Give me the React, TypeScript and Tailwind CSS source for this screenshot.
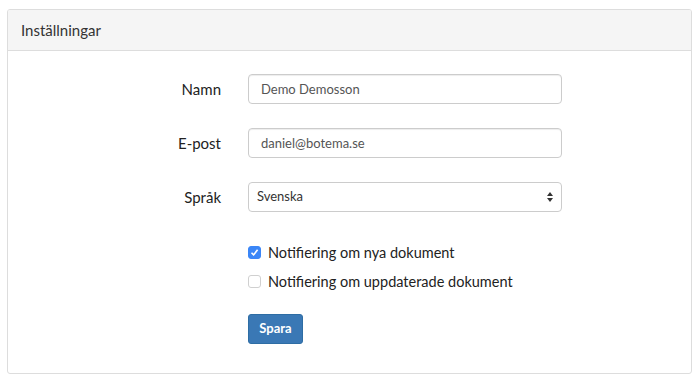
import { useState } from "react";

const Row = ({ label, children }: { label: string; children: React.ReactNode }) => (
  <div className="flex items-center h-[30px]">
    <label className="w-[213px] text-right text-[15px] text-[#222]">{label}</label>
    <div className="ml-[27px] w-[314px]">{children}</div>
  </div>
);

const Check = ({
  checked,
  onChange,
  label,
}: {
  checked: boolean;
  onChange: (v: boolean) => void;
  label: string;
}) => (
  <label className="flex items-center h-[13px] text-[14.5px] text-[#222] cursor-pointer">
    <span
      className={
        checked
          ? "w-[13px] h-[13px] rounded-[3px] bg-[#3b86f7] border border-[#3b86f7] flex items-center justify-center"
          : "w-[13px] h-[13px] rounded-[3px] bg-white border border-[#d0d0d0]"
      }
    >
      {checked && (
        <svg width="9" height="9" viewBox="0 0 9 9">
          <path d="M1.5 4.8 L3.6 6.9 L7.6 1.8" stroke="white" strokeWidth="1.6" fill="none" />
        </svg>
      )}
    </span>
    <input
      type="checkbox"
      className="hidden"
      checked={checked}
      onChange={(e) => onChange(e.target.checked)}
    />
    <span className="ml-[7px]">{label}</span>
  </label>
);

const App = () => {
  const [name, setName] = useState("Demo Demosson");
  const [email, setEmail] = useState("daniel@botema.se");
  const [lang, setLang] = useState("sv");
  const [newDocs, setNewDocs] = useState(true);
  const [updDocs, setUpdDocs] = useState(false);

  return (
    <div
      className="min-h-[384px] bg-white pt-[9px] px-[7px]"
      style={{ fontFamily: "Lato, 'Open Sans', sans-serif" }}
    >
      <div className="w-[685px] h-[365px] border border-[#dddddd] rounded-[3px] overflow-hidden">
        <div className="h-[41px] bg-[#f5f5f5] border-b border-[#dddddd] flex items-center px-[13px] text-[15px] text-[#333]">
          Inställningar
        </div>
        <form className="pt-[23px]" onSubmit={(e) => e.preventDefault()}>
          <div className="flex flex-col gap-[24px]">
            <Row label="Namn">
              <input
                className="w-full h-[30px] border border-[#cccccc] rounded-[4px] px-[12px] text-[13px] text-[#555] outline-none shadow-[inset_0_1px_1px_rgba(0,0,0,0.075)]"
                value={name}
                onChange={(e) => setName(e.target.value)}
              />
            </Row>
            <Row label="E-post">
              <input
                className="w-full h-[30px] border border-[#cccccc] rounded-[4px] px-[12px] text-[13px] text-[#555] outline-none shadow-[inset_0_1px_1px_rgba(0,0,0,0.075)]"
                value={email}
                onChange={(e) => setEmail(e.target.value)}
              />
            </Row>
            <Row label="Språk">
              <div className="relative">
                <select
                  className="appearance-none w-full h-[30px] border border-[#cccccc] rounded-[4px] pl-[8px] pr-6 text-[13px] text-[#333] bg-white outline-none"
                  value={lang}
                  onChange={(e) => setLang(e.target.value)}
                >
                  <option value="sv">Svenska</option>
                  <option value="en">English</option>
                </select>
                <svg
                  className="absolute right-[9px] top-[10px] pointer-events-none"
                  width="6"
                  height="10"
                  viewBox="0 0 6 10"
                >
                  <path d="M3 0 L6 4 L0 4 Z" fill="#333" />
                  <path d="M0 6 L6 6 L3 10 Z" fill="#333" />
                </svg>
              </div>
            </Row>
          </div>

          <div className="ml-[240px] mt-[34px] flex flex-col gap-[16px]">
            <Check checked={newDocs} onChange={setNewDocs} label="Notifiering om nya dokument" />
            <Check checked={updDocs} onChange={setUpdDocs} label="Notifiering om uppdaterade dokument" />
          </div>

          <div className="ml-[240px] mt-[26px]">
            <button
              type="submit"
              className="w-[55px] h-[30px] bg-[#3a78b5] border border-[#2e6da4] rounded-[3px] text-white text-[13px] font-bold"
            >
              Spara
            </button>
          </div>
        </form>
      </div>
    </div>
  );
};

export default App;
